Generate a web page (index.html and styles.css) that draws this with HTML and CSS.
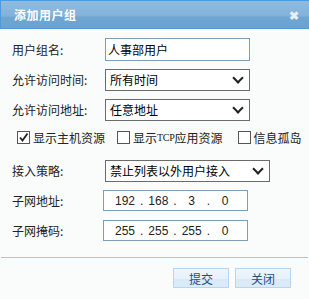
FILE: index.html
```html
<!DOCTYPE html>
<html lang="zh-CN">
  <head>
    <meta charset="UTF-8" />
    <title>添加用户组</title>
    <link rel="stylesheet" href="styles.css">
  </head>
  <body>
    <div class="dialog">
      <div class="titlebar">
        <span class="title">添加用户组</span>
        <span class="close">✖</span>
      </div>
      <div class="content">
        <div class="row">
          <label class="label">用户组名:</label>
          <input type="text" class="textbox" value="人事部用户" />
        </div>
        <div class="row">
          <label class="label">允许访问时间:</label>
          <div class="select"><span>所有时间</span><i class="arrow"></i></div>
        </div>
        <div class="row">
          <label class="label">允许访问地址:</label>
          <div class="select"><span>任意地址</span><i class="arrow"></i></div>
        </div>
        <div class="checks">
          <label class="check"><span class="box on"><svg viewBox="0 0 11 11" width="11" height="11"><path d="M2 5.5 L4.5 8.5 L9.5 1.5" fill="none" stroke="#222" stroke-width="1.8"/></svg></span>显示主机资源</label>
          <label class="check"><span class="box"></span>显示<span class="tcp">TCP</span>应用资源</label>
          <label class="check"><span class="box"></span>信息孤岛</label>
        </div>
        <div class="row">
          <label class="label">接入策略:</label>
          <div class="select wide"><span>禁止列表以外用户接入</span><i class="arrow"></i></div>
        </div>
        <div class="row ip-row">
          <label class="label">子网地址:</label>
          <div class="ip"><span>192</span>.<span>168</span>.<span>3</span>.<span>0</span></div>
        </div>
        <div class="row ip-row">
          <label class="label">子网掩码:</label>
          <div class="ip"><span>255</span>.<span>255</span>.<span>255</span>.<span>0</span></div>
        </div>
      </div>
      <div class="footer">
        <button class="btn">提交</button>
        <button class="btn">关闭</button>
      </div>
    </div>
  </body>
</html>
```

FILE: styles.css
```css
body {
  margin: 0;
  background-color: #fafcfc;
  font-family: "Noto Sans CJK SC", "Liberation Sans", sans-serif;
  font-size: 12px;
  color: #222;
}

.dialog {
  width: 307px;
  height: 299px;
  margin-left: 1px;
  background-color: #fafcfc;
  display: flex;
  flex-direction: column;
}

.titlebar {
  height: 27px;
  border: 1px solid #4b9be0;
  background: linear-gradient(to bottom, #8fbbdf 0%, #82b2da 55%, #6ea5d2 60%, #6aa3d1 100%);
  display: flex;
  align-items: center;
  justify-content: space-between;
  padding: 0 10px 0 13px;
  margin-left: -1px;
  width: 285px;
  box-sizing: content-box;
}

.title {
  color: #fff;
  font-weight: bold;
  font-size: 12px;
  letter-spacing: 0.5px;
}

.close {
  color: #e6eef6;
  font-size: 12px;
  font-weight: bold;
}

.content {
  padding: 9px 0 0 11px;
  height: 228px;
  box-sizing: border-box;
}

.row {
  display: flex;
  align-items: center;
  height: 23px;
  margin-bottom: 7px;
}

.label {
  width: 93px;
  flex: none;
}

.textbox {
  width: 145px;
  height: 23px;
  box-sizing: border-box;
  border: 1px solid #7f9db9;
  background: #fff;
  padding: 0 2px;
  margin: 0;
  font-family: inherit;
  font-size: 12px;
  color: #000;
  outline: none;
}

.select {
  width: 145px;
  height: 22px;
  box-sizing: border-box;
  border: 1px solid #6b6b6b;
  background: #fff;
  display: flex;
  align-items: center;
  justify-content: space-between;
  padding: 0 7px 0 4px;
  color: #000;
}

.select.wide {
  width: 165px;
}

.arrow {
  width: 6px;
  height: 6px;
  border-right: 2px solid #222;
  border-bottom: 2px solid #222;
  transform: rotate(45deg);
  margin-top: -4px;
}

.checks {
  display: flex;
  align-items: center;
  height: 18px;
  margin: 4px 0 13px 5px;
}

.check {
  display: flex;
  align-items: center;
  flex: none;
  white-space: nowrap;
  margin-right: 12px;
}

.check:nth-child(2) {
  margin-right: 15px;
}

.box {
  width: 11px;
  height: 11px;
  border: 1px solid #555;
  background: #fff;
  margin-right: 3px;
  display: flex;
}

.tcp {
  font-family: "Liberation Serif", serif;
  font-size: 10px;
  letter-spacing: -0.3px;
}

.ip-row .label {
  width: 91px;
}

.ip {
  width: 145px;
  height: 21px;
  box-sizing: border-box;
  border: 1px solid #7f9db9;
  background: #fff;
  display: flex;
  align-items: center;
  padding: 0 4px 0 6px;
  font-family: "Liberation Sans", sans-serif;
  font-size: 12px;
}

.ip span {
  width: 30px;
  text-align: center;
}

.footer {
  border-top: 1px solid #aac6de;
  display: flex;
  justify-content: flex-end;
  gap: 6px;
  padding: 10px 17px 0 0;
}

.btn {
  width: 56px;
  height: 20px;
  border: 1px solid #b9d5ee;
  background: linear-gradient(to bottom, #eef6fd 0%, #e6f1fb 55%, #d9e9f8 56%, #dcebf9 100%);
  color: #1c4e88;
  font-family: inherit;
  font-size: 12px;
  padding: 0;
}
```
